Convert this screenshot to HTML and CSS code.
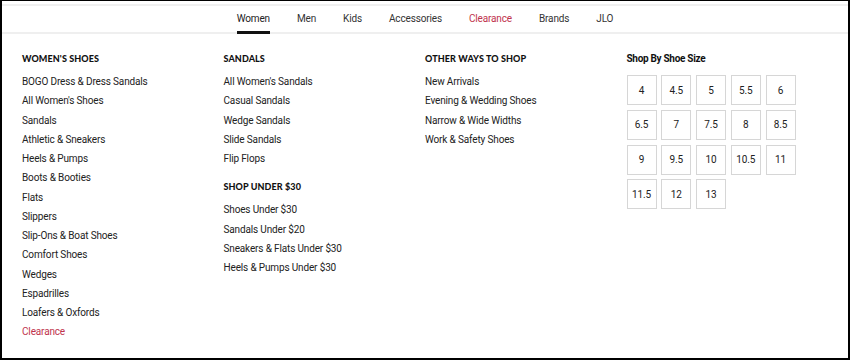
FILE: index.html
```html
<!DOCTYPE html>
<html>
<head>
<meta charset="utf-8">
<link rel="stylesheet" href="styles.css">
</head>
<body>
<div class="frame">
  <div class="topline"></div>
  <nav class="nav">
    <a class="nav-item active">Women</a>
    <a class="nav-item">Men</a>
    <a class="nav-item">Kids</a>
    <a class="nav-item">Accessories</a>
    <a class="nav-item red">Clearance</a>
    <a class="nav-item">Brands</a>
    <a class="nav-item">JLO</a>
  </nav>
  <div class="menu">
    <div class="col">
      <h3 class="heading">Women's Shoes</h3>
      <ul class="links">
        <li>BOGO Dress &amp; Dress Sandals</li>
        <li>All Women's Shoes</li>
        <li>Sandals</li>
        <li>Athletic &amp; Sneakers</li>
        <li>Heels &amp; Pumps</li>
        <li>Boots &amp; Booties</li>
        <li>Flats</li>
        <li>Slippers</li>
        <li>Slip-Ons &amp; Boat Shoes</li>
        <li>Comfort Shoes</li>
        <li>Wedges</li>
        <li>Espadrilles</li>
        <li>Loafers &amp; Oxfords</li>
        <li class="red">Clearance</li>
      </ul>
    </div>
    <div class="col">
      <h3 class="heading">Sandals</h3>
      <ul class="links">
        <li>All Women's Sandals</li>
        <li>Casual Sandals</li>
        <li>Wedge Sandals</li>
        <li>Slide Sandals</li>
        <li>Flip Flops</li>
      </ul>
      <h3 class="heading second">Shop Under $30</h3>
      <ul class="links">
        <li>Shoes Under $30</li>
        <li>Sandals Under $20</li>
        <li>Sneakers &amp; Flats Under $30</li>
        <li>Heels &amp; Pumps Under $30</li>
      </ul>
    </div>
    <div class="col">
      <h3 class="heading">Other Ways to Shop</h3>
      <ul class="links">
        <li>New Arrivals</li>
        <li>Evening &amp; Wedding Shoes</li>
        <li>Narrow &amp; Wide Widths</li>
        <li>Work &amp; Safety Shoes</li>
      </ul>
    </div>
    <div class="col">
      <h3 class="size-heading">Shop By Shoe Size</h3>
      <div class="sizes">
        <span class="size">4</span>
        <span class="size">4.5</span>
        <span class="size">5</span>
        <span class="size">5.5</span>
        <span class="size">6</span>
        <span class="size">6.5</span>
        <span class="size">7</span>
        <span class="size">7.5</span>
        <span class="size">8</span>
        <span class="size">8.5</span>
        <span class="size">9</span>
        <span class="size">9.5</span>
        <span class="size">10</span>
        <span class="size">10.5</span>
        <span class="size">11</span>
        <span class="size">11.5</span>
        <span class="size">12</span>
        <span class="size">13</span>
      </div>
    </div>
  </div>
</div>
</body>
</html>
```

FILE: styles.css
```css
html, body {
  margin: 0;
  padding: 0;
  background: #fff;
}
.frame {
  width: 850px;
  height: 360px;
  box-sizing: border-box;
  border: 2px solid #000;
  border-top-width: 1px;
  font-family: Roboto, "Liberation Sans", sans-serif;
  color: #222;
  overflow: hidden;
}
.topline {
  margin-top: 3px;
  height: 2px;
  background: #f0f0f0;
}
.nav {
  display: flex;
  justify-content: center;
  height: 26px;
  border-bottom: 2px solid #efefef;
  gap: 27px;
}
.nav-item {
  display: flex;
  align-items: center;
  box-sizing: border-box;
  height: 28px;
  margin-bottom: -2px;
  border-bottom: 3px solid transparent;
  font-size: 10px;
  letter-spacing: -0.15px;
  color: #333;
  cursor: pointer;
}
.nav-item.active {
  border-bottom-color: #111;
  color: #222;
}
.nav-item.red,
.links li.red {
  color: #c0334d;
}
.menu {
  display: grid;
  grid-template-columns: repeat(4, 201.5px);
  padding: 18px 0 0 20px;
}
.heading {
  margin: 0 0 6px;
  font-family: Lato, "Liberation Sans", sans-serif;
  font-weight: 900;
  font-size: 9px;
  line-height: 14px;
  text-transform: uppercase;
  color: #111;
  letter-spacing: 0.1px;
}
.heading.second {
  margin-top: 12px;
}
.links {
  list-style: none;
  margin: 0;
  padding: 0;
}
.links li {
  font-size: 10px;
  letter-spacing: -0.15px;
  line-height: 19.25px;
  height: 19.25px;
  color: #222;
}
.size-heading {
  margin: 0 0 9px;
  font-size: 10px;
  letter-spacing: -0.3px;
  line-height: 14px;
  font-weight: 700;
  color: #111;
}
.sizes {
  display: grid;
  grid-template-columns: repeat(5, 30px);
  grid-auto-rows: 30px;
  gap: 4.75px;
}
.size {
  display: flex;
  align-items: center;
  justify-content: center;
  box-sizing: border-box;
  border: 1.5px solid #d6d6d6;
  font-size: 10px;
  letter-spacing: -0.1px;
  color: #222;
}
```
